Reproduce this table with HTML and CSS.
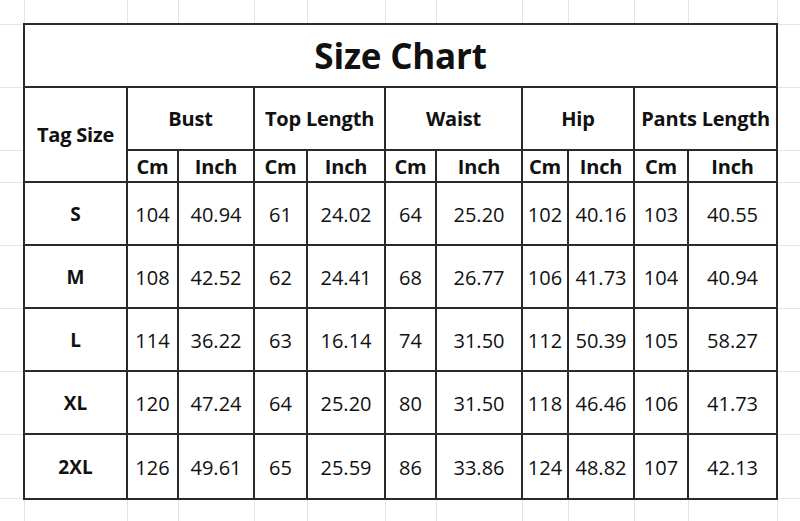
FILE: index.html
```html
<!DOCTYPE html>
<html>
<head>
<meta charset="utf-8">
<link rel="stylesheet" href="styles.css">
</head>
<body>
<div class="sheet">
  <table class="chart">
    <colgroup>
      <col class="c-tag"><col class="c1"><col class="c2"><col class="c3"><col class="c4"><col class="c5"><col class="c6"><col class="c7"><col class="c8"><col class="c9"><col class="c10">
    </colgroup>
    <tr class="r-title"><th colspan="11" class="title">Size Chart</th></tr>
    <tr class="r-head">
      <th rowspan="2" class="head">Tag Size</th>
      <th colspan="2" class="head">Bust</th>
      <th colspan="2" class="head">Top Length</th>
      <th colspan="2" class="head">Waist</th>
      <th colspan="2" class="head">Hip</th>
      <th colspan="2" class="head">Pants Length</th>
    </tr>
    <tr class="r-unit">
      <th class="head">Cm</th><th class="head">Inch</th>
      <th class="head">Cm</th><th class="head">Inch</th>
      <th class="head">Cm</th><th class="head">Inch</th>
      <th class="head">Cm</th><th class="head">Inch</th>
      <th class="head">Cm</th><th class="head">Inch</th>
    </tr>
    <tr class="r-data"><th class="size">S</th><td>104</td><td>40.94</td><td>61</td><td>24.02</td><td>64</td><td>25.20</td><td>102</td><td>40.16</td><td>103</td><td>40.55</td></tr>
    <tr class="r-data"><th class="size">M</th><td>108</td><td>42.52</td><td>62</td><td>24.41</td><td>68</td><td>26.77</td><td>106</td><td>41.73</td><td>104</td><td>40.94</td></tr>
    <tr class="r-data"><th class="size">L</th><td>114</td><td>36.22</td><td>63</td><td>16.14</td><td>74</td><td>31.50</td><td>112</td><td>50.39</td><td>105</td><td>58.27</td></tr>
    <tr class="r-data"><th class="size">XL</th><td>120</td><td>47.24</td><td>64</td><td>25.20</td><td>80</td><td>31.50</td><td>118</td><td>46.46</td><td>106</td><td>41.73</td></tr>
    <tr class="r-data r-last"><th class="size">2XL</th><td>126</td><td>49.61</td><td>65</td><td>25.59</td><td>86</td><td>33.86</td><td>124</td><td>48.82</td><td>107</td><td>42.13</td></tr>
  </table>
</div>
</body>
</html>
```
FILE: styles.css
```css
html, body {
  margin: 0;
  padding: 0;
}
body {
  width: 800px;
  height: 521px;
  overflow: hidden;
  font-family: "Open Sans", Lato, sans-serif;
  color: #111;
  background-color: #fff;
  background-repeat: no-repeat;
  background-image:
    linear-gradient(#e4e4e4, #e4e4e4), linear-gradient(#e4e4e4, #e4e4e4),
    linear-gradient(#e4e4e4, #e4e4e4), linear-gradient(#e4e4e4, #e4e4e4),
    linear-gradient(#e4e4e4, #e4e4e4), linear-gradient(#e4e4e4, #e4e4e4),
    linear-gradient(#e4e4e4, #e4e4e4), linear-gradient(#e4e4e4, #e4e4e4),
    linear-gradient(#e4e4e4, #e4e4e4), linear-gradient(#e4e4e4, #e4e4e4),
    linear-gradient(#e4e4e4, #e4e4e4), linear-gradient(#e4e4e4, #e4e4e4),
    linear-gradient(#e4e4e4, #e4e4e4), linear-gradient(#e4e4e4, #e4e4e4),
    linear-gradient(#e4e4e4, #e4e4e4), linear-gradient(#e4e4e4, #e4e4e4),
    linear-gradient(#e4e4e4, #e4e4e4), linear-gradient(#e4e4e4, #e4e4e4),
    linear-gradient(#e4e4e4, #e4e4e4), linear-gradient(#e4e4e4, #e4e4e4),
    linear-gradient(#e4e4e4, #e4e4e4);
  background-size:
    1px 100%, 1px 100%, 1px 100%, 1px 100%, 1px 100%, 1px 100%,
    1px 100%, 1px 100%, 1px 100%, 1px 100%, 1px 100%, 1px 100%,
    100% 1px, 100% 1px, 100% 1px, 100% 1px, 100% 1px, 100% 1px,
    100% 1px, 100% 1px, 100% 1px;
  background-position:
    24px 0, 127px 0, 178px 0, 254px 0, 307px 0, 385px 0,
    436px 0, 522px 0, 568px 0, 634px 0, 688px 0, 777px 0,
    0 24px, 0 87px, 0 150px, 0 182px, 0 245px, 0 308px,
    0 371px, 0 434px, 0 498px;
}
.sheet {
  padding: 23px 0 0 23px;
}
.chart {
  border-collapse: collapse;
  table-layout: fixed;
  width: 753px;
  background: #fff;
  border: 2px solid #1c1c1c;
}
.chart th, .chart td {
  border: 2px solid #2a2a2a;
  padding: 0;
  text-align: center;
  vertical-align: middle;
  white-space: nowrap;
}
.c-tag { width: 103px; }
.c1 { width: 51px; }
.c2 { width: 76px; }
.c3 { width: 53px; }
.c4 { width: 78px; }
.c5 { width: 51px; }
.c6 { width: 86px; }
.c7 { width: 46px; }
.c8 { width: 66px; }
.c9 { width: 54px; }
.c10 { width: 89px; }
.r-title { height: 63px; }
.r-head { height: 63px; }
.r-unit { height: 32px; }
.r-data { height: 63px; }
.r-data.r-last { height: 65px; }
.title {
  font-size: 35px;
  font-weight: 700;
  padding-top: 2px;
  letter-spacing: -0.2px;
}
.head {
  font-size: 20px;
  font-weight: 700;
  letter-spacing: -0.2px;
}
.size {
  font-size: 19px;
  font-weight: 700;
}
.chart td {
  font-size: 20px;
  font-weight: 400;
  padding-top: 1px;
}
```
